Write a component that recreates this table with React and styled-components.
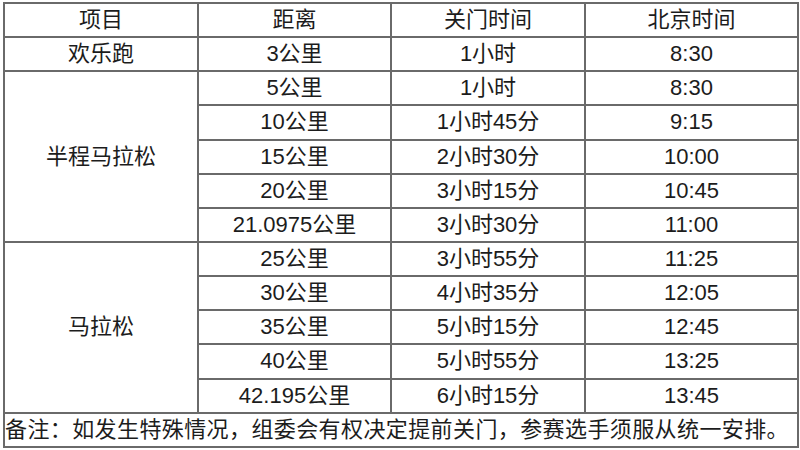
import React from 'react';
import styled, { createGlobalStyle } from 'styled-components';

const rows = [
    { group: '欢乐跑', span: 1, dist: '3公里', close: '1小时', time: '8:30' },
    { group: '半程马拉松', span: 5, dist: '5公里', close: '1小时', time: '8:30' },
    { dist: '10公里', close: '1小时45分', time: '9:15' },
    { dist: '15公里', close: '2小时30分', time: '10:00' },
    { dist: '20公里', close: '3小时15分', time: '10:45' },
    { dist: '21.0975公里', close: '3小时30分', time: '11:00' },
    { group: '马拉松', span: 5, dist: '25公里', close: '3小时55分', time: '11:25' },
    { dist: '30公里', close: '4小时35分', time: '12:05' },
    { dist: '35公里', close: '5小时15分', time: '12:45' },
    { dist: '40公里', close: '5小时55分', time: '13:25' },
    { dist: '42.195公里', close: '6小时15分', time: '13:45' },
];

function App() {
    return (
        <>
            <GlobalStyle />
            <Pagina>
                <Tabela>
                    <colgroup>
                        <col style={{ width: 194 }} />
                        <col style={{ width: 193 }} />
                        <col style={{ width: 194 }} />
                        <col style={{ width: 213 }} />
                    </colgroup>
                    <thead>
                        <Linha>
                            <Celula as="th">项目</Celula>
                            <Celula as="th">距离</Celula>
                            <Celula as="th">关门时间</Celula>
                            <Celula as="th">北京时间</Celula>
                        </Linha>
                    </thead>
                    <tbody>
                        {rows.map((r) => (
                            <Linha key={r.dist}>
                                {r.group && <Celula rowSpan={r.span}>{r.group}</Celula>}
                                <Celula>{r.dist}</Celula>
                                <Celula>{r.close}</Celula>
                                <Celula>{r.time}</Celula>
                            </Linha>
                        ))}
                        <Linha>
                            <Nota colSpan={4}>备注：如发生特殊情况，组委会有权决定提前关门，参赛选手须服从统一安排。</Nota>
                        </Linha>
                    </tbody>
                </Tabela>
            </Pagina>
        </>
    );
}

// - estilos

const GlobalStyle = createGlobalStyle`
  body {
    margin: 0;
    background: #fff;
    font-family: "Liberation Sans", "Noto Sans CJK SC", sans-serif;
    color: #1c1c1c;
  }
`;

const Pagina = styled.div`
  width: 800px;
  height: 450px;
  padding: 2px 0 0 3px;
  box-sizing: border-box;
  overflow: hidden;
`;

const Tabela = styled.table`
  width: 794px;
  table-layout: fixed;
  border-collapse: collapse;
  border: 2px solid #6a6a6a;
`;

const Linha = styled.tr`
  height: 34.15px;
`;

const Celula = styled.td`
  border: 2px solid #6a6a6a;
  padding: 0;
  text-align: center;
  vertical-align: middle;
  font-size: 22px;
  font-weight: 400;
  line-height: 28px;
  white-space: nowrap;
`;

const Nota = styled(Celula)`
  text-align: left;
  letter-spacing: 0.4px;
  overflow: hidden;
`;

export default App;
